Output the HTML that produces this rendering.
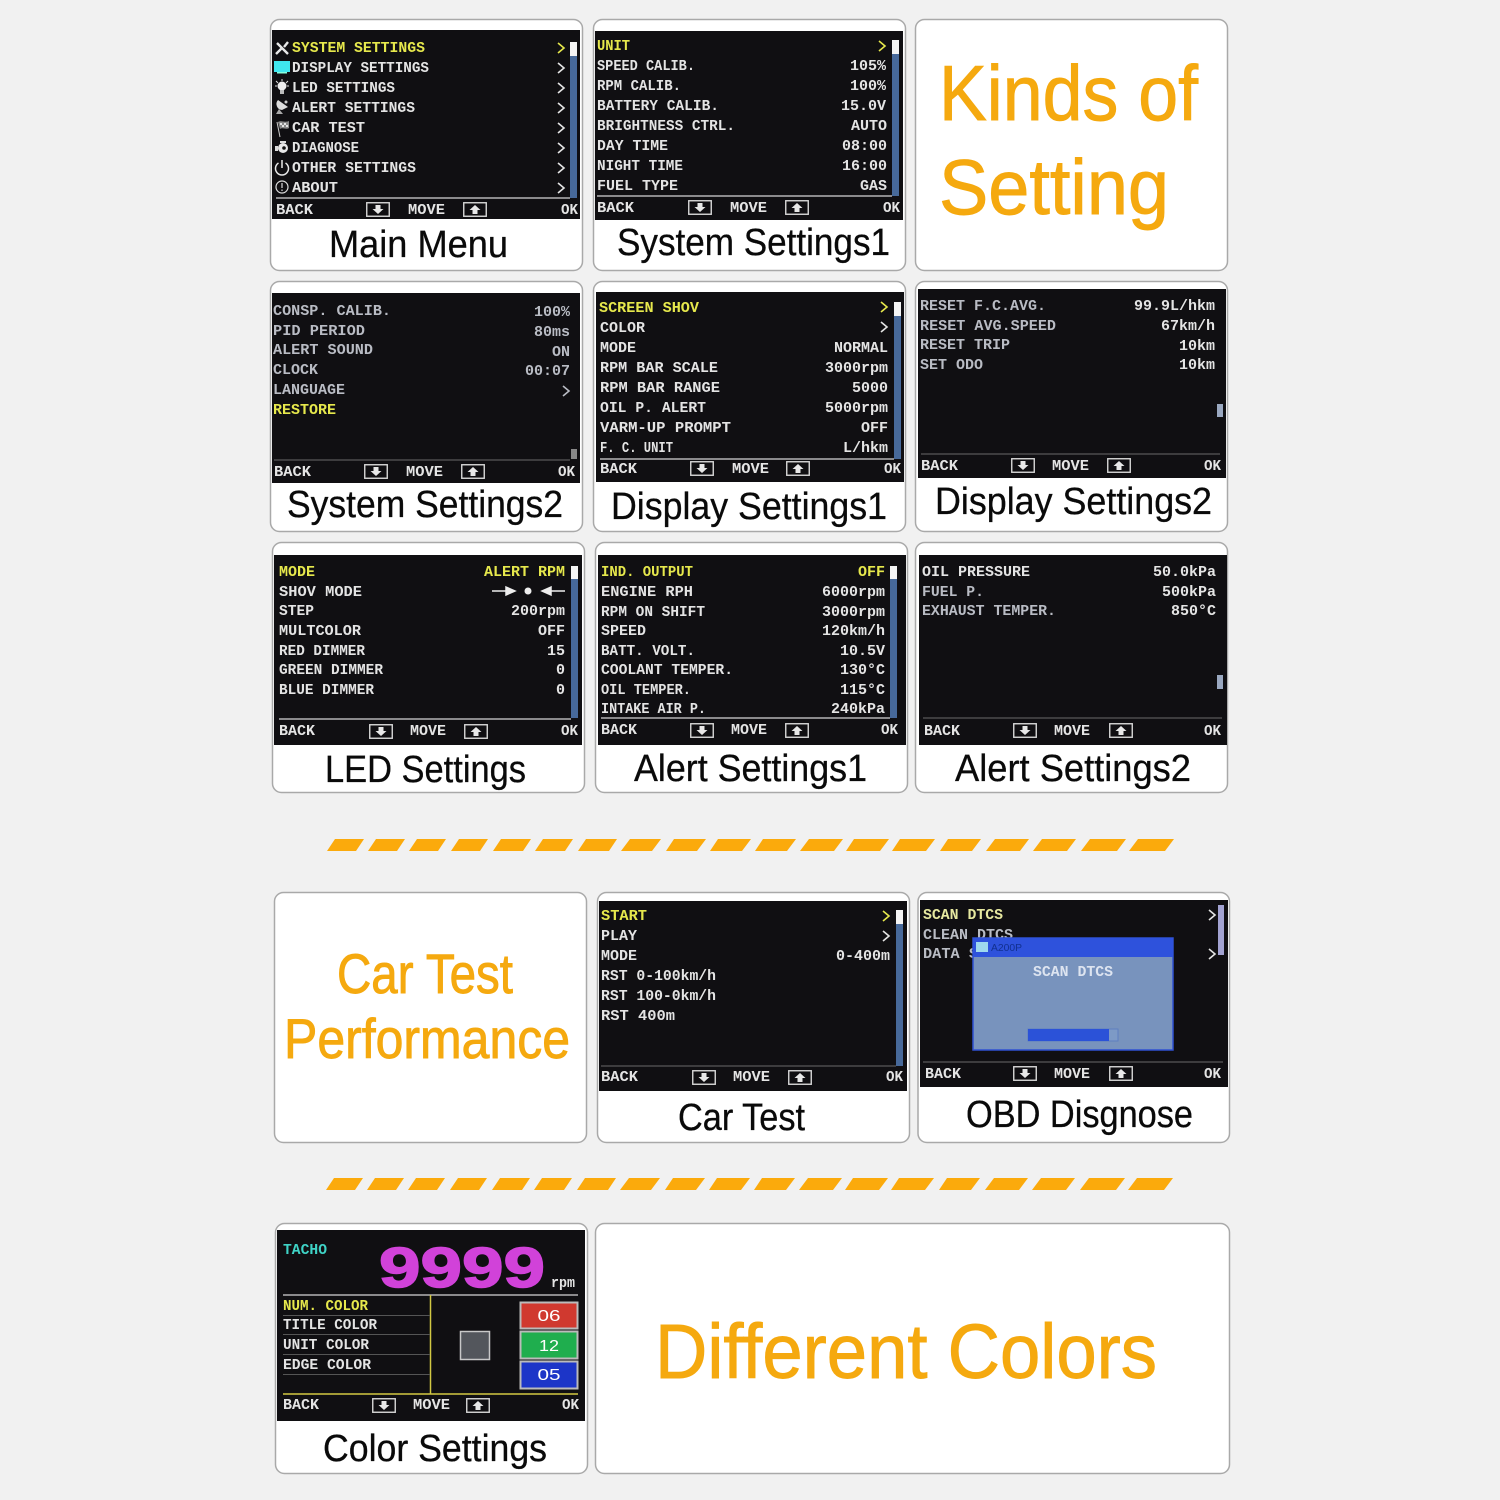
<!DOCTYPE html>
<html><head><meta charset="utf-8"><title>Kinds of Setting</title>
<style>
html,body{margin:0;padding:0;background:#f1f1f1;width:1500px;height:1500px;overflow:hidden}
svg{display:block}
.c{fill:#fff;stroke:#a9a9a9;stroke-width:1.5}
.s{fill:#100f12}
text{white-space:pre}
.m{font:bold 15px "Liberation Mono",monospace;fill:#e4e4e4;transform:translateY(-1px)}
.d{fill:#b9bcc4}
.y{fill:#e6e84c}
.e{text-anchor:end}
.cap{font:38px "Liberation Sans",sans-serif;fill:#0a0a0a;stroke:#0a0a0a;stroke-width:.3}
.o{font-family:"Liberation Sans",sans-serif;fill:#f5a90f;stroke:#f5a90f;stroke-width:.9}
.l{stroke:#b4b4b4;stroke-width:1.5}
.dl{stroke:#4c4c4c;stroke-width:1.5}
.sb{fill:#47699a}
.th{fill:#f4f4f4}
.g{fill:none;stroke:#e4e4e4;stroke-width:1.6}
</style></head><body>
<svg width="1500" height="1500" viewBox="0 0 1500 1500" xmlns="http://www.w3.org/2000/svg">
<defs>
<g id="dn"><rect x="0.75" y="0.75" width="22.5" height="13.5" fill="none" stroke="#d8d8d8" stroke-width="1.4"/><path d="M9.5 3h5v4h3l-5.500 5-5.500-5h3z" fill="#e8e8e8"/></g>
<g id="up"><rect x="0.75" y="0.75" width="22.5" height="13.5" fill="none" stroke="#d8d8d8" stroke-width="1.4"/><path d="M12 3l5.500 5h-3v4h-5v-4h-3z" fill="#e8e8e8"/></g>
</defs>
<rect width="1500" height="1500" fill="#f1f1f1"/>

<!-- cards -->
<rect class="c" x="270.500" y="19.500" width="312" height="251" rx="9"/>
<rect class="c" x="593.500" y="19.500" width="312" height="251" rx="9"/>
<rect class="c" x="915.500" y="19.500" width="312" height="251" rx="9"/>
<rect class="c" x="270.500" y="281.500" width="312" height="250" rx="9"/>
<rect class="c" x="593.500" y="281.500" width="312" height="250" rx="9"/>
<rect class="c" x="915.500" y="281.500" width="312" height="250" rx="9"/>
<rect class="c" x="272.500" y="542.500" width="312" height="250" rx="9"/>
<rect class="c" x="595.500" y="542.500" width="312" height="250" rx="9"/>
<rect class="c" x="915.500" y="542.500" width="312" height="250" rx="9"/>
<rect class="c" x="274.500" y="892.500" width="312" height="250" rx="9"/>
<rect class="c" x="597.500" y="892.500" width="312" height="250" rx="9"/>
<rect class="c" x="918" y="892.500" width="311.500" height="250" rx="9"/>
<rect class="c" x="275.500" y="1223.500" width="312" height="250" rx="9"/>
<rect class="c" x="595.500" y="1223.500" width="634" height="250" rx="9"/>

<!-- screens -->
<rect class="s" x="272" y="30" width="308" height="189"/>
<rect class="s" x="595" y="31" width="308" height="189"/>
<rect class="s" x="272" y="293" width="308" height="190"/>
<rect class="s" x="596" y="292" width="308" height="190"/>
<rect class="s" x="918" y="289" width="308" height="189"/>
<rect class="s" x="274" y="555" width="308" height="190"/>
<rect class="s" x="598" y="555" width="308" height="190"/>
<rect class="s" x="919" y="555" width="308" height="190"/>
<rect class="s" x="599" y="901" width="308" height="190"/>
<rect class="s" x="920" y="900" width="308" height="187"/>
<rect class="s" x="277" y="1230" width="308" height="191"/>

<!-- Main Menu -->
<rect class="sb" x="570" y="42" width="7" height="156"/><rect class="th" x="570" y="42" width="7" height="14"/>
<line class="l" x1="276" y1="198" x2="570" y2="198"/>
<path d="M277 43l11 11M288 42l-4 5M276 54l6-6" stroke="#e8e8e8" stroke-width="2.400" fill="none"/>
<rect x="274" y="61" width="16" height="11" fill="#3fe6ee"/><rect x="277" y="72" width="10" height="1.500" fill="#8fd"/>
<circle cx="282" cy="86" r="4.500" fill="#eee"/><rect x="280" y="90" width="4" height="4" fill="#bbb"/><path d="M276 81l2 2M288 81l-2 2M282 79v2M275 86h2M287 86h2" stroke="#ddd" stroke-width="1"/>
<path d="M278 100l10 7-6 3a6 6 0 0 1-4-10z" fill="#ddd"/><path d="M279 109l-3 5h7z" fill="#aaa"/><circle cx="286" cy="102" r="1.500" fill="#ccc"/>
<path d="M277 122l3 15" stroke="#ccc" stroke-width="1" fill="none"/><path d="M278 122c4-2 6 1 11-1v7c-3 2-6-1-9 1z" fill="#8a8a8a"/><path d="M280 123h2v2h-2zM284 123h2v2h-2zM282 125h2v2h-2zM286 125h2v2h-2z" fill="#e4e4e4"/>
<circle cx="283" cy="148" r="5" fill="#e8e8e8"/><rect x="280" y="141" width="6" height="2" fill="#ddd"/><rect x="275" y="146" width="3" height="5" fill="#ddd"/><circle cx="284" cy="148" r="1.800" fill="#111"/>
<path d="M278.500 163a6.500 6.500 0 1 0 7 0M282 160v8" fill="none" stroke="#e8e8e8" stroke-width="1.500"/>
<circle cx="282" cy="187" r="6" fill="none" stroke="#ddd" stroke-width="1.200"/><path d="M282 183v5M282 189.500v1.500" stroke="#ddd" stroke-width="1.200"/>
<text class="m y" x="292" y="53" textLength="133" lengthAdjust="spacingAndGlyphs">SYSTEM SETTINGS</text>
<text class="m" x="292" y="73" textLength="137" lengthAdjust="spacingAndGlyphs">DISPLAY SETTINGS</text>
<text class="m" x="292" y="93" textLength="103" lengthAdjust="spacingAndGlyphs">LED SETTINGS</text>
<text class="m" x="292" y="113" textLength="123" lengthAdjust="spacingAndGlyphs">ALERT SETTINGS</text>
<text class="m" x="292" y="133" textLength="73" lengthAdjust="spacingAndGlyphs">CAR TEST</text>
<text class="m" x="292" y="153" textLength="67" lengthAdjust="spacingAndGlyphs">DIAGNOSE</text>
<text class="m" x="292" y="173" textLength="124" lengthAdjust="spacingAndGlyphs">OTHER SETTINGS</text>
<text class="m" x="292" y="193" textLength="46" lengthAdjust="spacingAndGlyphs">ABOUT</text>
<path class="g" d="M558 43l6 5-6 5" style="stroke:#e6e84c"/><path class="g" d="M558 63l6 5-6 5M558 83l6 5-6 5M558 103l6 5-6 5M558 123l6 5-6 5M558 143l6 5-6 5M558 163l6 5-6 5M558 183l6 5-6 5"/>
<text class="m" x="276" y="215" textLength="37" lengthAdjust="spacingAndGlyphs">BACK</text><use href="#dn" x="366" y="202"/><text class="m" x="408" y="215" textLength="37" lengthAdjust="spacingAndGlyphs">MOVE</text><use href="#up" x="463" y="202"/><text class="m" x="561" y="215" textLength="17" lengthAdjust="spacingAndGlyphs">OK</text>
<text class="cap" x="329" y="257" textLength="179" lengthAdjust="spacingAndGlyphs">Main Menu</text>

<!-- System Settings1 -->
<rect class="sb" x="892" y="40" width="7" height="156"/><rect class="th" x="892" y="40" width="7" height="14"/>
<line class="l" x1="597" y1="196" x2="892" y2="196"/>
<text class="m y" x="597" y="51" textLength="33" lengthAdjust="spacingAndGlyphs">UNIT</text>
<path class="g" d="M879 41l6 5-6 5" style="stroke:#e6e84c"/>
<text class="m" x="597" y="71" textLength="98" lengthAdjust="spacingAndGlyphs">SPEED CALIB.</text><text class="m e" x="886" y="71">105%</text>
<text class="m" x="597" y="91" textLength="84" lengthAdjust="spacingAndGlyphs">RPM CALIB.</text><text class="m e" x="886" y="91">100%</text>
<text class="m" x="597" y="111" textLength="122" lengthAdjust="spacingAndGlyphs">BATTERY CALIB.</text><text class="m e" x="886" y="111">15.0V</text>
<text class="m" x="597" y="131" textLength="138" lengthAdjust="spacingAndGlyphs">BRIGHTNESS CTRL.</text><text class="m e" x="887" y="131">AUTO</text>
<text class="m" x="597" y="151" textLength="71" lengthAdjust="spacingAndGlyphs">DAY TIME</text><text class="m e" x="887" y="151">08:00</text>
<text class="m" x="597" y="171" textLength="86" lengthAdjust="spacingAndGlyphs">NIGHT TIME</text><text class="m e" x="887" y="171">16:00</text>
<text class="m" x="597" y="191" textLength="81" lengthAdjust="spacingAndGlyphs">FUEL TYPE</text><text class="m e" x="887" y="191">GAS</text>
<text class="m" x="597" y="213" textLength="37" lengthAdjust="spacingAndGlyphs">BACK</text><use href="#dn" x="688" y="200"/><text class="m" x="730" y="213" textLength="37" lengthAdjust="spacingAndGlyphs">MOVE</text><use href="#up" x="785" y="200"/><text class="m" x="883" y="213" textLength="17" lengthAdjust="spacingAndGlyphs">OK</text>
<text class="cap" x="617" y="255" textLength="273" lengthAdjust="spacingAndGlyphs">System Settings1</text>

<!-- Kinds of Setting -->
<text class="o" x="939" y="120" font-size="78" textLength="259" lengthAdjust="spacingAndGlyphs">Kinds of</text>
<text class="o" x="939" y="214" font-size="78" textLength="230" lengthAdjust="spacingAndGlyphs">Setting</text>

<!-- System Settings2 -->
<rect x="571" y="449" width="6" height="10" fill="#888"/>
<line class="dl" x1="274" y1="460" x2="570" y2="460"/>
<text class="m d" x="273" y="316" textLength="118" lengthAdjust="spacingAndGlyphs">CONSP. CALIB.</text><text class="m d e" x="570" y="317">100%</text>
<text class="m d" x="273" y="336" textLength="92" lengthAdjust="spacingAndGlyphs">PID PERIOD</text><text class="m d e" x="570" y="337">80ms</text>
<text class="m d" x="273" y="355" textLength="100" lengthAdjust="spacingAndGlyphs">ALERT SOUND</text><text class="m d e" x="570" y="357">ON</text>
<text class="m d" x="273" y="375" textLength="45" lengthAdjust="spacingAndGlyphs">CLOCK</text><text class="m d e" x="570" y="376">00:07</text>
<text class="m d" x="273" y="395" textLength="72" lengthAdjust="spacingAndGlyphs">LANGUAGE</text>
<path class="g" d="M563 386l6 5-6 5" style="stroke:#b9bcc4"/>
<text class="m y" x="273" y="415" textLength="63" lengthAdjust="spacingAndGlyphs">RESTORE</text>
<text class="m" x="274" y="477" textLength="37" lengthAdjust="spacingAndGlyphs">BACK</text><use href="#dn" x="364" y="464"/><text class="m" x="406" y="477" textLength="37" lengthAdjust="spacingAndGlyphs">MOVE</text><use href="#up" x="461" y="464"/><text class="m" x="558" y="477" textLength="17" lengthAdjust="spacingAndGlyphs">OK</text>
<text class="cap" x="287" y="517" textLength="276" lengthAdjust="spacingAndGlyphs">System Settings2</text>

<!-- Display Settings1 -->
<rect class="sb" x="894" y="302" width="7" height="157"/><rect class="th" x="894" y="302" width="7" height="14"/>
<line class="l" x1="600" y1="459" x2="894" y2="459"/>
<text class="m y" x="599" y="313" textLength="100" lengthAdjust="spacingAndGlyphs">SCREEN SHOV</text>
<path class="g" d="M881 302l6 5-6 5" style="stroke:#e6e84c"/>
<text class="m" x="600" y="333" textLength="45" lengthAdjust="spacingAndGlyphs">COLOR</text>
<path class="g" d="M881 322l6 5-6 5"/>
<text class="m" x="600" y="353" textLength="36" lengthAdjust="spacingAndGlyphs">MODE</text><text class="m e" x="888" y="353">NORMAL</text>
<text class="m" x="600" y="373" textLength="118" lengthAdjust="spacingAndGlyphs">RPM BAR SCALE</text><text class="m e" x="888" y="373">3000rpm</text>
<text class="m" x="600" y="393" textLength="120" lengthAdjust="spacingAndGlyphs">RPM BAR RANGE</text><text class="m e" x="888" y="393">5000</text>
<text class="m" x="600" y="413" textLength="106" lengthAdjust="spacingAndGlyphs">OIL P. ALERT</text><text class="m e" x="888" y="413">5000rpm</text>
<text class="m" x="600" y="433" textLength="131" lengthAdjust="spacingAndGlyphs">VARM-UP PROMPT</text><text class="m e" x="888" y="433">OFF</text>
<text class="m" x="600" y="453" textLength="73" lengthAdjust="spacingAndGlyphs">F. C. UNIT</text><text class="m e" x="888" y="453">L/hkm</text>
<text class="m" x="600" y="474" textLength="37" lengthAdjust="spacingAndGlyphs">BACK</text><use href="#dn" x="690" y="461"/><text class="m" x="732" y="474" textLength="37" lengthAdjust="spacingAndGlyphs">MOVE</text><use href="#up" x="786" y="461"/><text class="m" x="884" y="474" textLength="17" lengthAdjust="spacingAndGlyphs">OK</text>
<text class="cap" x="611" y="519" textLength="276" lengthAdjust="spacingAndGlyphs">Display Settings1</text>

<!-- Display Settings2 -->
<rect x="1217" y="404" width="6" height="13" fill="#9aa8c0"/>
<line class="dl" x1="921" y1="454" x2="1220" y2="454"/>
<text class="m d" x="920" y="311" textLength="126" lengthAdjust="spacingAndGlyphs">RESET F.C.AVG.</text><text class="m e" x="1215" y="311">99.9L/hkm</text>
<text class="m d" x="920" y="331" textLength="136" lengthAdjust="spacingAndGlyphs">RESET AVG.SPEED</text><text class="m e" x="1215" y="331">67km/h</text>
<text class="m d" x="920" y="350" textLength="90" lengthAdjust="spacingAndGlyphs">RESET TRIP</text><text class="m e" x="1215" y="351">10km</text>
<text class="m d" x="920" y="370" textLength="63" lengthAdjust="spacingAndGlyphs">SET ODO</text><text class="m e" x="1215" y="370">10km</text>
<text class="m" x="921" y="471" textLength="37" lengthAdjust="spacingAndGlyphs">BACK</text><use href="#dn" x="1011" y="458"/><text class="m" x="1052" y="471" textLength="37" lengthAdjust="spacingAndGlyphs">MOVE</text><use href="#up" x="1107" y="458"/><text class="m" x="1204" y="471" textLength="17" lengthAdjust="spacingAndGlyphs">OK</text>
<text class="cap" x="935" y="514" textLength="277" lengthAdjust="spacingAndGlyphs">Display Settings2</text>

<!-- LED Settings -->
<rect class="sb" x="571" y="566" width="7" height="152"/><rect class="th" x="571" y="566" width="7" height="13"/>
<line class="l" x1="279" y1="719" x2="571" y2="719"/>
<text class="m y" x="279" y="577" textLength="36" lengthAdjust="spacingAndGlyphs">MODE</text><text class="m y e" x="565" y="577">ALERT RPM</text>
<text class="m" x="279" y="597" textLength="83" lengthAdjust="spacingAndGlyphs">SHOV MODE</text>
<path d="M492 591h20M506 587l9 4-9 4z" stroke="#eee" stroke-width="1.500" fill="#eee"/><circle cx="528" cy="591" r="3.500" fill="#eee"/><path d="M565 591h-20M551 587l-9 4 9 4z" stroke="#eee" stroke-width="1.500" fill="#eee"/>
<text class="m" x="279" y="616" textLength="35" lengthAdjust="spacingAndGlyphs">STEP</text><text class="m e" x="565" y="616">200rpm</text>
<text class="m" x="279" y="636" textLength="82" lengthAdjust="spacingAndGlyphs">MULTCOLOR</text><text class="m e" x="565" y="636">OFF</text>
<text class="m" x="279" y="656" textLength="86" lengthAdjust="spacingAndGlyphs">RED DIMMER</text><text class="m e" x="565" y="656">15</text>
<text class="m" x="279" y="675" textLength="104" lengthAdjust="spacingAndGlyphs">GREEN DIMMER</text><text class="m e" x="565" y="675">0</text>
<text class="m" x="279" y="695" textLength="95" lengthAdjust="spacingAndGlyphs">BLUE DIMMER</text><text class="m e" x="565" y="695">0</text>
<text class="m" x="279" y="736" textLength="36" lengthAdjust="spacingAndGlyphs">BACK</text><use href="#dn" x="369" y="724"/><text class="m" x="410" y="736" textLength="36" lengthAdjust="spacingAndGlyphs">MOVE</text><use href="#up" x="464" y="724"/><text class="m" x="561" y="736" textLength="17" lengthAdjust="spacingAndGlyphs">OK</text>
<text class="cap" x="325" y="782" textLength="201" lengthAdjust="spacingAndGlyphs">LED Settings</text>

<!-- Alert Settings1 -->
<rect class="sb" x="890" y="566" width="7" height="152"/><rect class="th" x="890" y="566" width="7" height="13"/>
<line class="l" x1="601" y1="718" x2="890" y2="718"/>
<text class="m y" x="601" y="577" textLength="92" lengthAdjust="spacingAndGlyphs">IND. OUTPUT</text><text class="m y e" x="885" y="577">OFF</text>
<text class="m" x="601" y="597" textLength="92" lengthAdjust="spacingAndGlyphs">ENGINE RPH</text><text class="m e" x="885" y="597">6000rpm</text>
<text class="m" x="601" y="617" textLength="104" lengthAdjust="spacingAndGlyphs">RPM ON SHIFT</text><text class="m e" x="885" y="617">3000rpm</text>
<text class="m" x="601" y="636" textLength="45" lengthAdjust="spacingAndGlyphs">SPEED</text><text class="m e" x="885" y="636">120km/h</text>
<text class="m" x="601" y="656" textLength="94" lengthAdjust="spacingAndGlyphs">BATT. VOLT.</text><text class="m e" x="885" y="656">10.5V</text>
<text class="m" x="601" y="675" textLength="132" lengthAdjust="spacingAndGlyphs">COOLANT TEMPER.</text><text class="m e" x="885" y="675">130°C</text>
<text class="m" x="601" y="695" textLength="90" lengthAdjust="spacingAndGlyphs">OIL TEMPER.</text><text class="m e" x="885" y="695">115°C</text>
<text class="m" x="601" y="714" textLength="105" lengthAdjust="spacingAndGlyphs">INTAKE AIR P.</text><text class="m e" x="885" y="714">240kPa</text>
<text class="m" x="601" y="735" textLength="36" lengthAdjust="spacingAndGlyphs">BACK</text><use href="#dn" x="690" y="723"/><text class="m" x="731" y="735" textLength="36" lengthAdjust="spacingAndGlyphs">MOVE</text><use href="#up" x="785" y="723"/><text class="m" x="881" y="735" textLength="17" lengthAdjust="spacingAndGlyphs">OK</text>
<text class="cap" x="634" y="781" textLength="233" lengthAdjust="spacingAndGlyphs">Alert Settings1</text>

<!-- Alert Settings2 -->
<rect x="1217" y="675" width="6" height="14" fill="#9aa8c0"/>
<line class="dl" x1="923" y1="718" x2="1222" y2="718"/>
<text class="m" x="922" y="577" textLength="108" lengthAdjust="spacingAndGlyphs">OIL PRESSURE</text><text class="m e" x="1216" y="577">50.0kPa</text>
<text class="m d" x="922" y="597" textLength="62" lengthAdjust="spacingAndGlyphs">FUEL P.</text><text class="m e" x="1216" y="597">500kPa</text>
<text class="m d" x="922" y="616" textLength="134" lengthAdjust="spacingAndGlyphs">EXHAUST TEMPER.</text><text class="m e" x="1216" y="616">850°C</text>
<text class="m" x="924" y="736" textLength="36" lengthAdjust="spacingAndGlyphs">BACK</text><use href="#dn" x="1013" y="723"/><text class="m" x="1054" y="736" textLength="36" lengthAdjust="spacingAndGlyphs">MOVE</text><use href="#up" x="1109" y="723"/><text class="m" x="1204" y="736" textLength="17" lengthAdjust="spacingAndGlyphs">OK</text>
<text class="cap" x="955" y="781" textLength="236" lengthAdjust="spacingAndGlyphs">Alert Settings2</text>

<!-- stripe 1 -->
<g fill="#fbaa0c">
<path d="M335 839h29l-8 12h-29zM376 839h29l-8 12h-29zM417 839h29l-8 12h-29zM459 839h29l-8 12h-29zM501 839h30l-8 12h-30zM543 839h30l-8 12h-30zM586 839h31l-8 12h-31zM630 839h31l-9 12h-31zM674 839h32l-9 12h-31zM718 839h33l-9 12h-32zM763 839h33l-9 12h-32zM809 839h34l-9 12h-34zM854 839h35l-9 12h-34zM900 839h35l-9 12h-34zM948 839h33l-9 12h-32zM995 839h34l-9 12h-34zM1042 839h34l-9 12h-34zM1090 839h36l-9 12h-36zM1138 839h36l-9 12h-36z"/>
<path d="M334 1178h29l-8 12h-29zM375 1178h29l-8 12h-29zM416 1178h29l-8 12h-29zM458 1178h29l-8 12h-29zM500 1178h30l-8 12h-30zM542 1178h30l-8 12h-30zM585 1178h31l-8 12h-31zM629 1178h31l-9 12h-31zM673 1178h32l-9 12h-31zM717 1178h33l-9 12h-32zM762 1178h33l-9 12h-32zM808 1178h34l-9 12h-34zM853 1178h35l-9 12h-34zM899 1178h35l-9 12h-34zM947 1178h33l-9 12h-32zM994 1178h34l-9 12h-34zM1041 1178h34l-9 12h-34zM1089 1178h36l-9 12h-36zM1137 1178h36l-9 12h-36z"/>
</g>

<!-- Car Test Performance -->
<text class="o" x="337" y="993" font-size="56" textLength="176" lengthAdjust="spacingAndGlyphs">Car Test</text>
<text class="o" x="284" y="1058" font-size="56" textLength="286" lengthAdjust="spacingAndGlyphs">Performance</text>

<!-- Car Test -->
<rect class="sb" x="896" y="910" width="7" height="156"/><rect class="th" x="896" y="910" width="7" height="14"/>
<line class="dl" x1="601" y1="1066" x2="896" y2="1066"/>
<text class="m y" x="601" y="921" textLength="46" lengthAdjust="spacingAndGlyphs">START</text>
<path class="g" d="M883 911l6 5-6 5" style="stroke:#e6e84c"/>
<text class="m" x="601" y="941" textLength="36" lengthAdjust="spacingAndGlyphs">PLAY</text>
<path class="g" d="M883 931l6 5-6 5"/>
<text class="m" x="601" y="961" textLength="36" lengthAdjust="spacingAndGlyphs">MODE</text><text class="m e" x="890" y="961">0-400m</text>
<text class="m" x="601" y="981" textLength="115" lengthAdjust="spacingAndGlyphs">RST 0-100km/h</text>
<text class="m" x="601" y="1001" textLength="115" lengthAdjust="spacingAndGlyphs">RST 100-0km/h</text>
<text class="m" x="601" y="1021" textLength="74" lengthAdjust="spacingAndGlyphs">RST 400m</text>
<text class="m" x="601" y="1082" textLength="37" lengthAdjust="spacingAndGlyphs">BACK</text><use href="#dn" x="692" y="1070"/><text class="m" x="733" y="1082" textLength="37" lengthAdjust="spacingAndGlyphs">MOVE</text><use href="#up" x="788" y="1070"/><text class="m" x="886" y="1082" textLength="17" lengthAdjust="spacingAndGlyphs">OK</text>
<text class="cap" x="678" y="1130" textLength="127" lengthAdjust="spacingAndGlyphs">Car Test</text>

<!-- OBD -->
<rect x="1218" y="905" width="6" height="50" fill="#a3a3d2"/>
<line class="dl" x1="923" y1="1062" x2="1223" y2="1062"/>
<text class="m" x="923" y="920" textLength="80" lengthAdjust="spacingAndGlyphs" style="fill:#e6e8a0">SCAN DTCS</text>
<path class="g" d="M1209 910l6 5-6 5M1209 949l6 5-6 5"/>
<text class="m d" x="923" y="940" textLength="90" lengthAdjust="spacingAndGlyphs">CLEAN DTCS</text>
<text class="m d" x="923" y="959" textLength="55" lengthAdjust="spacingAndGlyphs">DATA S</text>
<rect x="973" y="938" width="200" height="112" fill="#7893bd" stroke="#2f50d2" stroke-width="1.500"/>
<rect x="973" y="938" width="200" height="19" fill="#2e52dc"/>
<rect x="976" y="942" width="12" height="10" fill="#9fd9ee"/>
<text x="991" y="951" font-family="Liberation Sans,sans-serif" font-size="10" fill="#123090" textLength="31" lengthAdjust="spacingAndGlyphs">A200P</text>
<text class="m" x="1033" y="977" textLength="80" lengthAdjust="spacingAndGlyphs" style="fill:#dde4f0">SCAN DTCS</text>
<rect x="1028" y="1029" width="90" height="12" fill="#7d9ac6" stroke="#5e7fc0"/>
<rect x="1028" y="1029" width="81" height="12" fill="#2b52d8"/>
<text class="m" x="925" y="1079" textLength="36" lengthAdjust="spacingAndGlyphs">BACK</text><use href="#dn" x="1013" y="1066"/><text class="m" x="1054" y="1079" textLength="36" lengthAdjust="spacingAndGlyphs">MOVE</text><use href="#up" x="1109" y="1066"/><text class="m" x="1204" y="1079" textLength="17" lengthAdjust="spacingAndGlyphs">OK</text>
<text class="cap" x="966" y="1127" textLength="227" lengthAdjust="spacingAndGlyphs">OBD Disgnose</text>

<!-- Color Settings -->
<text class="m" x="283" y="1255" textLength="44" lengthAdjust="spacingAndGlyphs" style="fill:#3fd3c6">TACHO</text>
<text x="379" y="1287" font-family="Liberation Sans,sans-serif" font-weight="bold" font-size="57" fill="#d142d9" stroke="#d142d9" stroke-width="1.500" textLength="166" lengthAdjust="spacingAndGlyphs">9999</text>
<text class="m" x="551" y="1288" textLength="24" lengthAdjust="spacingAndGlyphs">rpm</text>
<line class="l" x1="283" y1="1295" x2="578" y2="1295"/>
<line x1="430.500" y1="1295" x2="430.500" y2="1394" stroke="#d2c843" stroke-width="1.500"/>
<line x1="283" y1="1394" x2="578" y2="1394" stroke="#d2c843" stroke-width="1.500"/>
<path d="M283 1315.500h147M283 1334.500h147M283 1354.500h147M283 1374.500h147" stroke="#555" stroke-width="1"/>
<text class="m y" x="283" y="1311" textLength="85" lengthAdjust="spacingAndGlyphs">NUM. COLOR</text>
<text class="m" x="283" y="1330" textLength="94" lengthAdjust="spacingAndGlyphs">TITLE COLOR</text>
<text class="m" x="283" y="1350" textLength="86" lengthAdjust="spacingAndGlyphs">UNIT COLOR</text>
<text class="m" x="283" y="1370" textLength="88" lengthAdjust="spacingAndGlyphs">EDGE COLOR</text>
<rect x="460.500" y="1331.500" width="29" height="28" fill="#53565c" stroke="#c8c8c8" stroke-width="1.500"/>
<rect x="520.500" y="1302.500" width="57" height="26" fill="#d0392f" stroke="#bbb" stroke-width="2"/>
<rect x="520.500" y="1331.500" width="57" height="27" fill="#1fae4e" stroke="#bbb" stroke-width="2"/>
<rect x="520.500" y="1361.500" width="57" height="27" fill="#1c35c8" stroke="#bbb" stroke-width="2"/>
<g font-family="Liberation Sans,sans-serif" font-size="16" fill="#fff" text-anchor="middle">
<text x="549" y="1321" textLength="23" lengthAdjust="spacingAndGlyphs">06</text>
<text x="549" y="1351" textLength="20" lengthAdjust="spacingAndGlyphs">12</text>
<text x="549" y="1380" textLength="23" lengthAdjust="spacingAndGlyphs">05</text>
</g>
<text class="m" x="283" y="1410" textLength="36" lengthAdjust="spacingAndGlyphs">BACK</text><use href="#dn" x="372" y="1398"/><text class="m" x="413" y="1410" textLength="37" lengthAdjust="spacingAndGlyphs">MOVE</text><use href="#up" x="466" y="1398"/><text class="m" x="562" y="1410" textLength="17" lengthAdjust="spacingAndGlyphs">OK</text>
<text class="cap" x="323" y="1461" textLength="224" lengthAdjust="spacingAndGlyphs">Color Settings</text>

<!-- Different Colors -->
<text class="o" x="655" y="1378" font-size="77" textLength="502" lengthAdjust="spacingAndGlyphs">Different Colors</text>
</svg>
</body></html>
